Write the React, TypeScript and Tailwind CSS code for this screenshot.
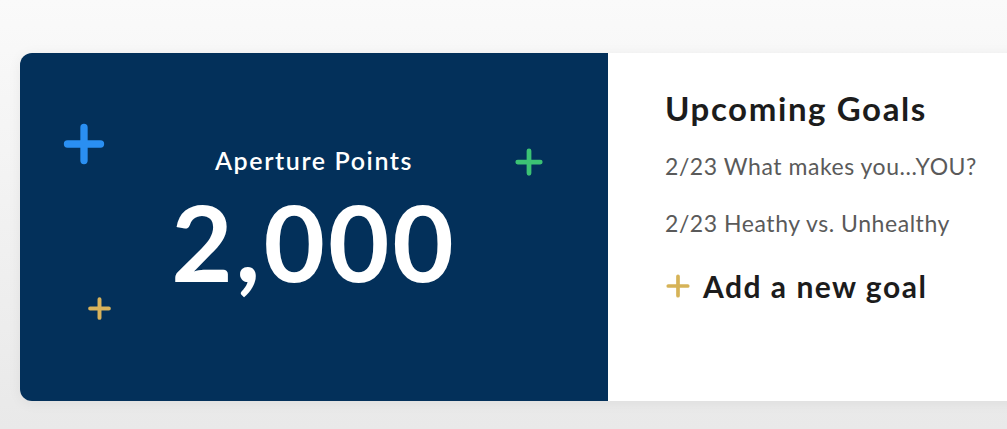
import React from 'react';

function Plus({ className, stroke }: { className: string; stroke: number }) {
    return (
        <svg viewBox="0 0 24 24" className={className} fill="none" stroke="currentColor" strokeWidth={stroke} strokeLinecap="round">
            <path d="M12 3v18M3 12h18" />
        </svg>
    );
}

export default function App() {
    const goals = ['2/23 What makes you...YOU?', '2/23 Heathy vs. Unhealthy'];

    return (
        <div
            className="w-[1007px] h-[429px] overflow-hidden bg-gradient-to-b from-[#fafafa] to-[#e9e9e9] pt-[53px] pl-[20px]"
            style={{ fontFamily: 'Lato, "Noto Sans", sans-serif' }}
        >
            <div className="flex h-[348px] w-[1100px] shadow-[0_2px_14px_rgba(0,0,0,0.06)] rounded-l-[12px]">
                {/* Points card */}
                <div className="relative w-[588px] bg-[#03305a] rounded-l-[12px] flex flex-col items-center pt-[91px]">
                    <Plus className="absolute left-[42px] top-[69px] w-[44px] h-[44px] text-[#2a8ff2]" stroke={4} />
                    <Plus className="absolute left-[494px] top-[94px] w-[30px] h-[30px] text-[#3cc274]" stroke={3.8} />
                    <Plus className="absolute left-[67px] top-[243px] w-[25px] h-[25px] text-[#d8b25b]" stroke={3.8} />
                    <div className="text-white text-[25px] font-semibold leading-[32px] tracking-[1.6px]">Aperture Points</div>
                    <div className="text-white text-[106px] font-bold leading-[110px] tracking-[3px] mt-[10px]">2,000</div>
                </div>

                {/* Upcoming goals */}
                <div className="flex-1 bg-white pl-[57px] pt-[35px]">
                    <h2 className="text-[33px] font-bold text-[#1c1c1c] leading-[40px] tracking-[1.6px]">Upcoming Goals</h2>
                    <div className="mt-[24px] flex flex-col gap-[29px]">
                        {goals.map((g) => (
                            <div key={g} className="text-[23px] text-[#5a5a5a] leading-[28px] tracking-[0.55px]">{g}</div>
                        ))}
                    </div>
                    <div className="mt-[31px] flex items-center gap-[12px]">
                        <Plus className="w-[26px] h-[26px] text-[#d6b357]" stroke={3.4} />
                        <span className="text-[30px] font-bold text-[#1c1c1c] leading-[36px] tracking-[1.5px]">Add a new goal</span>
                    </div>
                </div>
            </div>
        </div>
    );
}
